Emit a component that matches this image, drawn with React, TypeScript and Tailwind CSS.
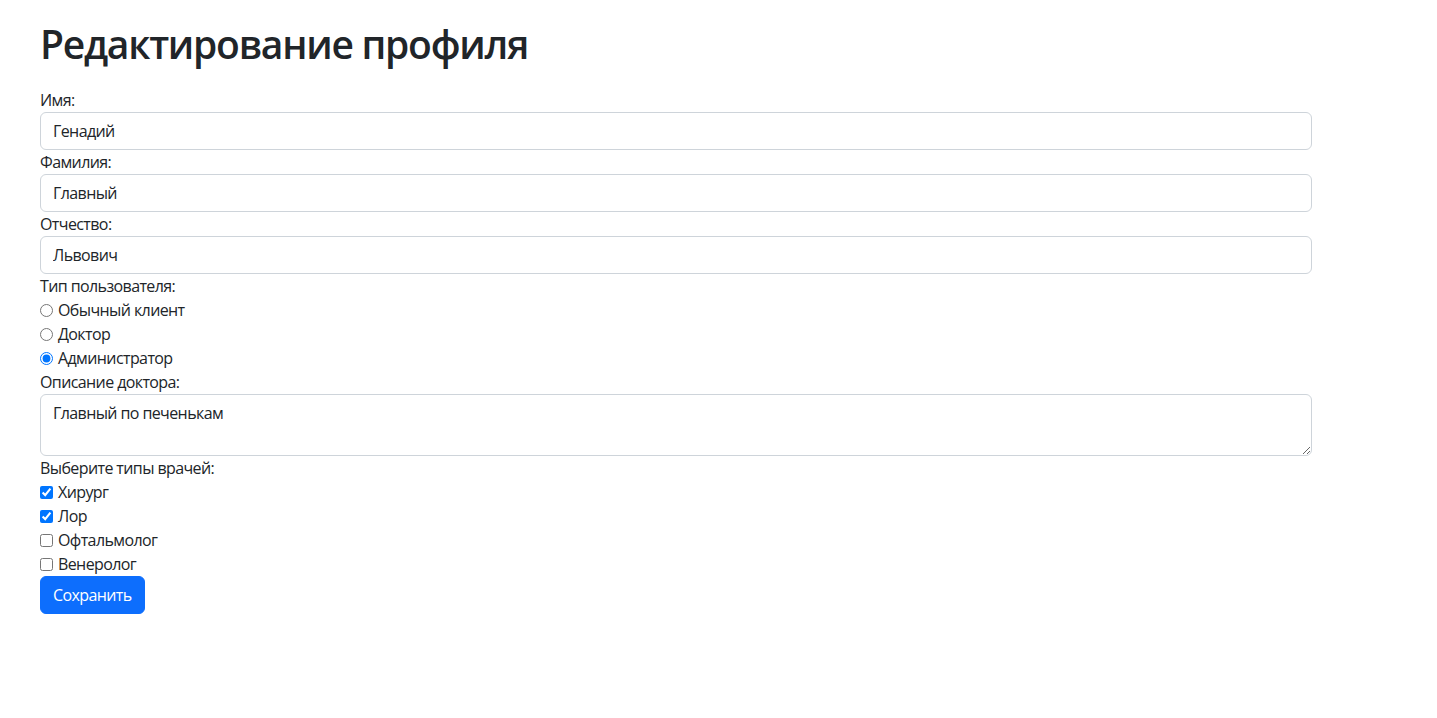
import React from 'react';

const fieldClass =
  'block w-full h-[38px] px-3 py-1.5 text-base text-[#212529] bg-white border border-[#ced4da] rounded-md outline-none tracking-[-0.6px]';

const TextField: React.FC<{ label: string; value: string }> = ({ label, value }) => (
  <div>
    <label className="block leading-6">{label}</label>
    <input type="text" defaultValue={value} className={fieldClass} />
  </div>
);

const Choice: React.FC<{ type: 'radio' | 'checkbox'; label: string; checked?: boolean; name?: string }> = ({
  type,
  label,
  checked = false,
  name,
}) => (
  <label className="flex items-center leading-6 h-6">
    <input type={type} name={name} defaultChecked={checked} className="m-0 w-[13px] h-[13px]" />
    <span className="ml-[5px]">{label}</span>
  </label>
);

export default function App() {
  return (
    <div
      className="min-h-screen bg-white text-[#212529] text-base tracking-[-0.6px]"
      style={{ fontFamily: '"Open Sans", "Noto Sans", sans-serif' }}
    >
      <div className="w-[1272px] ml-10 pt-5">
        <h1 className="text-[39px] font-semibold leading-[48px] mb-5 tracking-[-1.25px]">Редактирование профиля</h1>

        <form className="flex flex-col">
          <TextField label="Имя:" value="Генадий" />
          <TextField label="Фамилия:" value="Главный" />
          <TextField label="Отчество:" value="Львович" />

          <div>
            <div className="leading-6">Тип пользователя:</div>
            <Choice type="radio" name="role" label="Обычный клиент" />
            <Choice type="radio" name="role" label="Доктор" />
            <Choice type="radio" name="role" label="Администратор" checked />
          </div>

          <div>
            <label className="block leading-6">Описание доктора:</label>
            <textarea
              rows={2}
              defaultValue="Главный по печенькам"
              className="block w-full h-[62px] px-3 py-1.5 leading-6 text-base tracking-[-0.6px] bg-white border border-[#ced4da] rounded-md outline-none resize-y"
            />
          </div>

          <div>
            <div className="leading-6">Выберите типы врачей:</div>
            <Choice type="checkbox" label="Хирург" checked />
            <Choice type="checkbox" label="Лор" checked />
            <Choice type="checkbox" label="Офтальмолог" />
            <Choice type="checkbox" label="Венеролог" />
          </div>

          <div>
            <button
              type="button"
              className="h-[38px] px-3 py-1.5 text-base leading-6 tracking-[-0.6px] text-white bg-[#0d6efd] border border-[#0d6efd] rounded-md"
            >
              Сохранить
            </button>
          </div>
        </form>
      </div>
    </div>
  );
}
